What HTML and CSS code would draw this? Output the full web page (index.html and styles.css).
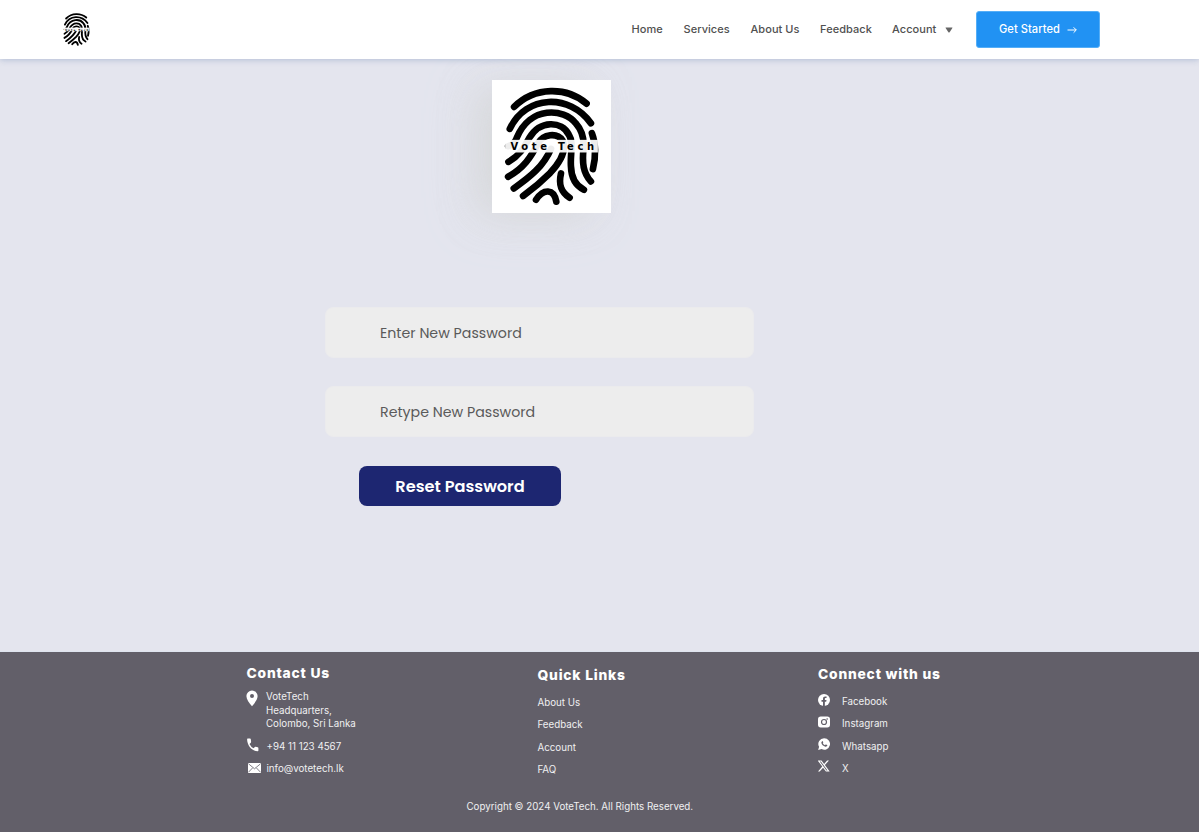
FILE: index.html
```html
<!DOCTYPE html>
<html lang="en">
<head>
<meta charset="utf-8">
<title>VoteTech - Reset Password</title>
<link rel="stylesheet" href="styles.css">
</head>
<body>
<div class="page">
  <header class="navbar">
    <svg class="brand" viewBox="36 30 357 400"><use href="#fingerprint"/></svg>
    <nav class="menu">
      <a class="m-home">Home</a><a class="m-services">Services</a><a class="m-about">About Us</a><a class="m-feedback">Feedback</a><a class="m-account">Account</a>
      <svg class="caret" viewBox="0 0 8 6"><path d="M.9.5h6.2q.6 0 .3.6L4.6 5.2q-.6.7-1.2 0L.6 1.1Q.3.5.9.5z" fill="#666"/></svg>
    </nav>
    <a class="cta"><span>Get Started</span><svg class="arrow" viewBox="0 0 10 8"><path d="M.5 4h8.7M6.6 1.3 9.3 4 6.6 6.7" fill="none" stroke="#fff" stroke-width="1"/></svg></a>
  </header>
  <main class="content">
    <svg class="logo" viewBox="36 30 357 400">
      <g id="fingerprint">
        <g fill="none" stroke="#000" stroke-width="20" stroke-linecap="round" stroke-linejoin="round">
          <path d="M102 111C165 49 260 50 320 101"/>
          <path d="M89 177C138 73 270 71 333 160"/>
          <path d="M84 229Q102 225 110 204C150 107 252 114 288 161Q314 190 311 235C306 280 310 310 333 335"/>
          <path d="M85 276C125 254 137 222 148 204C180 150 245 152 267 195C282 218 270 255 273 290C274 325 285 347 312 360"/>
          <path d="M84 321C130 296 153 262 173 222C190 190 232 188 248 212C262 244 236 282 210 310C180 340 155 360 129 379"/>
          <path d="M101 356C150 322 190 290 213 237"/>
          <path d="M168 390C190 356 222 356 229 396"/>
          <path d="M243 311C235 345 243 367 269 384"/>
          <path d="M336 190C347 218 349 260 339 298"/>
        </g>
        <rect x="75" y="210" width="279" height="38" fill="#fff" fill-opacity=".93"/>
        <text class="logo-text" x="91" y="241" textLength="252">Vote Tech</text>
      </g>
    </svg>
    <form class="reset">
      <div class="field">Enter New Password</div>
      <div class="field">Retype New Password</div>
      <div class="submit">Reset Password</div>
    </form>
  </main>
  <footer class="footer">
    <div class="columns">
      <section class="contact">
        <h2>Contact Us</h2>
        <div class="row address"><svg class="pin" viewBox="0 0 12 17"><path fill="#fff" fill-rule="evenodd" d="M6 .5A5.6 5.6 0 0 0 .4 6.1C.4 9.5 3.2 13 6 16.200C8.800 13 11.600 9.500 11.600 6.100A5.600 5.600 0 0 0 6 .5zM6 4a2 2 0 1 1 0 4 2 2 0 0 1 0-4z"/></svg><span>VoteTech<br>Headquarters,<br>Colombo, Sri Lanka</span></div>
        <div class="row phone"><svg class="phone-icon" viewBox="0 0 12 14"><path fill="#fff" d="M.7.5H3q.7 0 .8.7l.3 2.600q0 .5-.3.9L2.500 6.100Q4 9.200 6.500 10.300L7.900 9q.4-.3.8-.2l2 .5q.7.2.7.9v2.300q0 .7-.7.700C5 13.200.1 7.500.1 1.200Q.1.500.7.500z"/></svg><span>+94 11 123 4567</span></div>
        <div class="row mail"><svg class="mail-icon" viewBox="0 0 13 10"><rect width="13" height="10" rx=".6" fill="#fff"/><path d="M.5.8 6.500 5.800 12.500.8M.4 9.300 4.700 4.800M12.600 9.300 8.300 4.800" fill="none" stroke="#625f69" stroke-width=".8"/></svg><span>info@votetech.lk</span></div>
      </section>
      <section class="links">
        <h2>Quick Links</h2>
        <a>About Us</a><a>Feedback</a><a>Account</a><a>FAQ</a>
      </section>
      <section class="social">
        <h2>Connect with us</h2>
        <div class="row"><svg viewBox="0 0 24 24"><circle cx="12" cy="12" r="12" fill="#fff"/><path fill="#625f69" d="M10 24v-8.500H7V12h3V9.400C10 6.400 11.800 4.800 14.500 4.800q1.300 0 2.600.2v3h-1.500C14.100 8 13.700 8.900 13.700 9.800V12H17l-.6 3.500h-2.700V24z"/></svg><span>Facebook</span></div>
        <div class="row"><svg viewBox="0 0 24 24"><rect y="1" width="24" height="22" rx="5.500" fill="#fff"/><circle cx="12" cy="12" r="5" fill="none" stroke="#625f69" stroke-width="2.400"/><circle cx="18.300" cy="6" r="1.600" fill="#625f69"/></svg><span>Instagram</span></div>
        <div class="row"><svg viewBox="0 0 24 24"><path fill="#fff" d="M12.500.5a11.500 11.500 0 1 1-5.300 21.700L.3 24l1.900-6.300A11.500 11.500 0 0 1 12.500.5z"/><path fill="#625f69" d="M8.400 6.300q.9-.3 1.200.4l.9 2.200q.1.500-.9 1.600c1 2 2.500 3.200 4.400 4l1.200-1.300q.4-.5.900-.2l2.200 1.100q.5.300.3 1c-.5 1.700-2 2.500-3.700 2.200-4.300-.8-7.900-4.200-8.200-7.700q-.1-2.200 1.700-3.300z"/></svg><span>Whatsapp</span></div>
        <div class="row"><svg viewBox="0 0 24 24"><path fill="#fff" d="M18.200 1h3.700l-8.100 9.200L23.300 23H15.900l-5.800-7.600L3.400 23H-.2l8.700-9.900L-.6 1H7l5.300 7zM16.900 20.800h2.100L5.800 3.100H3.600z"/></svg><span>X</span></div>
      </section>
    </div>
    <p class="copyright">Copyright © 2024 VoteTech. All Rights Reserved.</p>
  </footer>
</div>
</body>
</html>
```
FILE: styles.css
```css
* { box-sizing: border-box; }
body { margin: 0; background: #fff; font-family: Inter, "Liberation Sans", sans-serif; }
.page { width: 1199px; height: 832px; display: flex; flex-direction: column; background: #e4e5ee; overflow: hidden; }
svg { display: block; flex: none; }
a { white-space: nowrap; }

.navbar { height: 59px; flex: none; display: flex; align-items: flex-start; padding: 11px 99px 0 60px; background: #fff; box-shadow: 0 1px 6px rgba(120, 145, 185, .45); z-index: 1; }
.brand { width: 33px; height: 37px; }
.menu { display: flex; align-items: center; height: 36px; margin-left: auto; font-size: 11px; font-weight: 500; letter-spacing: .05px; color: #505050; }
.m-home { width: 52px; }
.m-services { width: 67px; }
.m-about { width: 69.500px; }
.m-feedback { width: 72px; }
.m-account { width: 52.500px; }
.caret { width: 8px; height: 6px; margin-top: 2px; }
.cta { width: 124px; height: 37px; margin-left: 23.500px; display: flex; align-items: center; padding: 0 0 1px 22px; border: 1px solid #55aef7; border-radius: 3px; background: #2192f3; color: #fff; font-size: 11.100px; font-weight: 500; letter-spacing: .05px; }
.cta span { width: 68px; }
.arrow { width: 10px; height: 8px; margin-top: 1px; }

.content { height: 593px; flex: none; padding-top: 21px; border-bottom: 1px solid #dfe4ef; }
.logo { width: 119px; height: 133px; margin-left: 492px; background: #fff; box-shadow: -16px 4px 38px -6px rgba(207, 209, 208, .55), -20px 6px 50px -4px rgba(212, 214, 215, .4); }
.logo-text { font: 700 30px "DejaVu Sans", sans-serif; }
.reset { margin: 94px 0 0 325px; width: 429px; }
.field { height: 51px; margin-bottom: 28px; padding-left: 54px; border: 1px solid #ebebed; border-radius: 8px; background: #ededed; color: #5a5a5a; font: 400 14.200px/50px Poppins, "Open Sans", sans-serif; }
.submit { width: 202px; height: 40px; margin: 29px 0 0 34px; border-radius: 8px; background: #1d2671; color: #fff; text-align: center; font: 600 16.200px/41px Poppins, "Open Sans", sans-serif; }

.footer { height: 180px; flex: none; background: #625f69; color: #f0f0f1; font-size: 9.750px; line-height: 13.500px; letter-spacing: 0; }
.columns { display: grid; grid-template-columns: 291px 280.500px 1fr; height: 148px; padding-left: 246.500px; }
h2 { margin: 0; color: #fff; font-size: 13.800px; line-height: 18px; font-weight: 800; letter-spacing: .8px; }
.row { display: flex; }
.contact { padding-top: 12px; }
.contact .row span { width: 110px; }
.pin { width: 12px; height: 17px; margin: 0 8px 0 -.500px; }
.address { margin-top: 8px; }
.phone { margin-top: 7px; align-items: center; }
.phone-icon { width: 12px; height: 14px; margin-right: 8px; margin-bottom: 3px; }
.phone span { padding-top: 1px; }
.mail { margin-top: 7px; align-items: center; }
.mail-icon { width: 13px; height: 10px; margin: 0 5.500px 0 1.500px; }
.links { padding-top: 14px; display: flex; flex-direction: column; }
.links h2 { margin-bottom: 12px; }
.links a { height: 22.300px; }
.social { padding-top: 13px; }
.social h2 { margin-bottom: 10.500px; }
.social .row { height: 22.300px; }
.social .row svg { width: 12px; height: 12px; margin-right: 12px; }
.social .row span { padding-top: 1.500px; }
.copyright { margin: 0 0 0 466.500px; }
```
